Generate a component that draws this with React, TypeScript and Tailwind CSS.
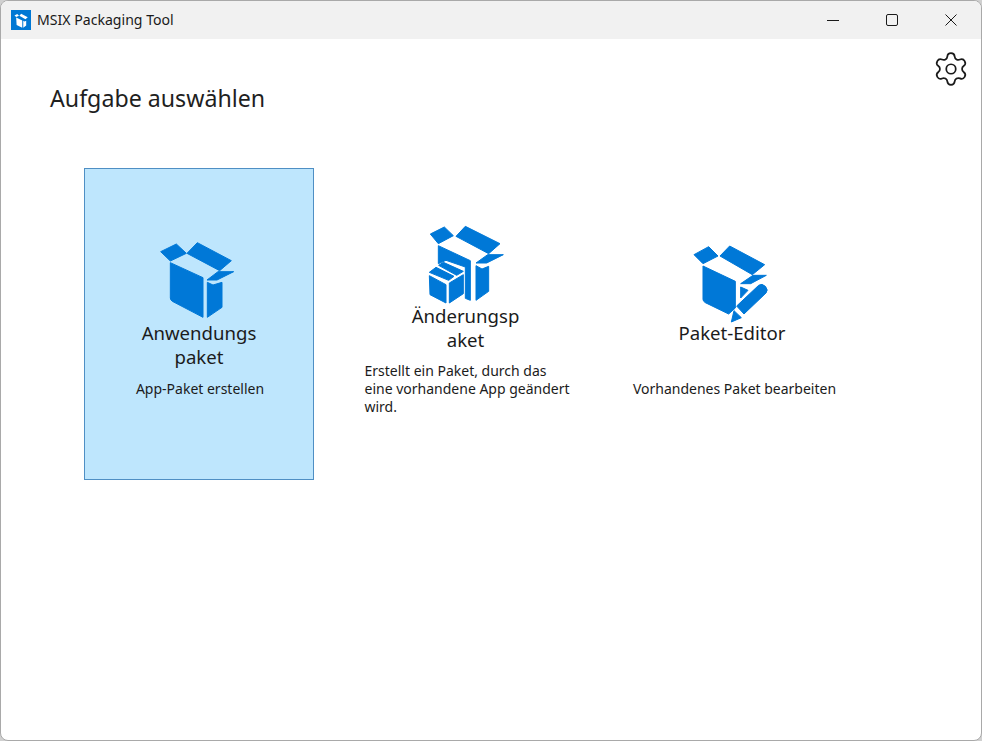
import { Settings } from 'lucide-react'
import type { ReactNode } from 'react'

const BLUE = '#0078d7'

function BoxIcon() {
  return (
    <svg width="76" height="78" viewBox="4 0 228 234" fill={BLUE} stroke={BLUE} strokeWidth="3" className="overflow-visible">
      <polygon points="3,29 50,6 80,34 32,57" />
      <polygon points="82,34 113,2 215,56 180,86" />
      <path d="M32,62 L130,107 L130,226 L38,178 Q32,174 32,168 Z" />
      <polygon points="143,121 160,129 187,121 187,196 143,226" />
      <polygon points="142,114 175,89 222,89 172,114" />
    </svg>
  )
}

function PatchIcon() {
  return (
    <svg width="80" height="80" viewBox="0 0 240 240" fill={BLUE} stroke={BLUE} strokeWidth="3" className="overflow-visible">
      <polygon points="13,33 55,12 82,38 37,62" />
      <polygon points="90,40 118,10 222,62 188,92" />
      <polygon points="37,68 133,113 133,232 118,226 118,132 60,112 37,122" />
      <polygon points="150,128 168,138 188,130 188,205 150,232" />
      <polygon points="150,120 185,95 232,95 182,120" />
      <polygon points="10,148 30,133 84,160 68,172" />
      <polygon points="38,127 52,118 112,145 92,157" />
      <polygon points="10,158 60,185 60,240 12,215" />
      <polygon points="70,180 112,155 112,212 70,240" />
    </svg>
  )
}

function EditIcon() {
  return (
    <svg width="80" height="80" viewBox="2 0 240 240" fill={BLUE} stroke={BLUE} strokeWidth="3" className="overflow-visible">
      <polygon points="8,38 52,14 80,42 35,65" />
      <polygon points="86,42 115,12 220,68 183,98" />
      <path d="M35,72 L132,118 L132,198 L112,216 L42,182 Q35,178 35,172 Z" />
      <polygon points="148,125 185,100 225,100 178,125" />
      <polygon points="148,135 170,145 148,168" />
      <path d="M136,192 L202,130 Q212,123 222,133 Q232,144 224,153 L158,216 Z" />
      <polygon points="128,206 150,227 120,240" />
    </svg>
  )
}

function Card(props: {
  icon: ReactNode
  title: string[]
  desc: string[]
  className: string
  titleGap: string
  descClass: string
}) {
  return (
    <div className={`w-[230px] h-[312px] flex flex-col items-center border ${props.className}`}>
      {props.icon}
      <div className={`text-[18.6px] leading-[24px] text-center text-[#1b1b1b] ${props.titleGap}`}>
        {props.title.map(l => <div key={l}>{l}</div>)}
      </div>
      <div className={`self-stretch text-[14px] leading-[18px] text-[#1b1b1b] ${props.descClass}`}>
        {props.desc.map(l => <div key={l}>{l}</div>)}
      </div>
    </div>
  )
}

export default function App() {
  return (
    <div className="w-[982px] h-[741px] bg-[#d0d0d0] overflow-hidden font-['Noto_Sans',sans-serif]">
      <div className="w-full h-full flex flex-col bg-white border border-[#a9a9a9] rounded-[8px] overflow-hidden">
        {/* Title bar */}
        <div className="h-[38px] shrink-0 bg-[#f1f1f1] flex items-center pl-[10px] pr-[1px]">
          <div className="w-[20px] h-[20px] bg-[#0078d4] flex items-center justify-center">
            <svg width="15" height="15" viewBox="0 0 240 240" fill="#fff">
              <polygon points="8,38 52,14 80,42 35,65" />
              <polygon points="86,42 115,12 220,68 183,98" />
              <path d="M35,72 L132,118 L132,236 L42,190 Z" />
              <polygon points="148,125 170,135 195,125 195,200 148,236" />
            </svg>
          </div>
          <span className="ml-[6px] text-[14.1px] text-[#1a1a1a]">MSIX Packaging Tool</span>
          <div className="ml-auto flex">
            <div className="w-[58px] h-[38px] flex items-center justify-center">
              <svg width="12" height="12" viewBox="0 0 12 12" fill="none" stroke="#1a1a1a"><path d="M0 6.5H12" /></svg>
            </div>
            <div className="w-[59px] h-[38px] flex items-center justify-center">
              <svg width="12" height="12" viewBox="0 0 12 12" fill="none" stroke="#1a1a1a"><rect x="0.5" y="0.5" width="11" height="11" rx="1.5" /></svg>
            </div>
            <div className="w-[59px] h-[38px] flex items-center justify-center">
              <svg width="12" height="12" viewBox="0 0 12 12" fill="none" stroke="#1a1a1a"><path d="M0.5 0.5L11.5 11.5M11.5 0.5L0.5 11.5" /></svg>
            </div>
          </div>
        </div>

        {/* Heading */}
        <div className="flex justify-between items-start pl-[49px] pr-[11px] pt-[11px]">
          <h1 className="mt-[32px] text-[23.2px] leading-[32px] font-normal text-[#1f1f1f]">Aufgabe auswählen</h1>
          <Settings size={38} strokeWidth={1.1} color="#1a1a1a" />
        </div>

        {/* Task cards */}
        <div className="flex gap-[36.5px] pl-[83px] mt-[54px]">
          <Card
            className="bg-[#bee6fd] border-[#4f8fc4] pt-[73px]"
            icon={<BoxIcon />}
            title={['Anwendungs', 'paket']}
            desc={['App-Paket erstellen']}
            titleGap="mt-[1px]"
            descClass="mt-[11px] pl-[2px] text-center"
          />
          <Card
            className="border-transparent pt-[54px]"
            icon={<PatchIcon />}
            title={['Änderungsp', 'aket']}
            desc={['Erstellt ein Paket, durch das', 'eine vorhandene App geändert', 'wird.']}
            titleGap="mt-[1px]"
            descClass="mt-[10px] pl-[13px] text-left"
          />
          <Card
            className="border-transparent pt-[73px]"
            icon={<EditIcon />}
            title={['Paket-Editor']}
            desc={['Vorhandenes Paket bearbeiten']}
            titleGap="mt-[-1px]"
            descClass="mt-[35px] pl-[5px] text-center"
          />
        </div>
      </div>
    </div>
  )
}
